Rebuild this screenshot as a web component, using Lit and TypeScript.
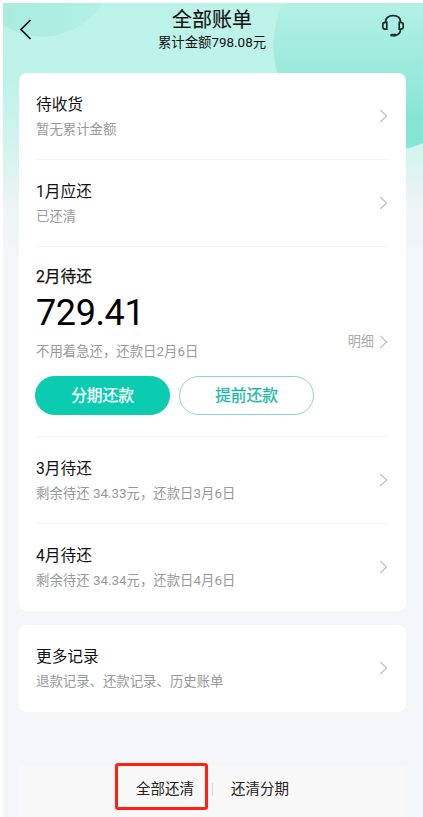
import { LitElement, html, css } from "lit";
import { customElement, property } from "lit/decorators.js";

const chevron = html`<svg class="chevron" width="9" height="14" viewBox="0 0 9 14" fill="none">
  <path d="M1.2 1 7.6 7 1.2 13" stroke="#c3c3c3" stroke-width="1.3" />
</svg>`;

@customElement("bill-row")
class BillRow extends LitElement {
  @property() heading = "";
  @property() note = "";

  static styles = css`
    :host {
      box-sizing: border-box;
      height: 87px;
      display: flex;
      align-items: center;
      justify-content: space-between;
      padding-right: 1px;
      border-bottom: 1px solid #f5f5f6;
    }
    :host(:last-of-type) {
      border-bottom-color: transparent;
    }
    .text {
      padding-top: 1px;
    }
    .heading {
      font-size: 15.7px;
      line-height: 23px;
      color: #111;
    }
    .note {
      margin-top: 4px;
      font-size: 13.4px;
      line-height: 20px;
      color: #999;
    }
    .chevron {
      display: block;
    }
  `;

  render() {
    return html`
      <div class="text">
        <div class="heading">${this.heading}</div>
        <div class="note">${this.note}</div>
      </div>
      ${chevron}
    `;
  }
}

@customElement("app-root")
class AppRoot extends LitElement {
  static styles = css`
    :host {
      display: block;
      box-sizing: border-box;
      width: 423px;
      height: 817px;
      padding: 3px 0 0 3px;
      background: #fff;
      overflow: hidden;
      font-family: Roboto, "Noto Sans CJK SC", sans-serif;
    }
    .screen {
      position: relative;
      height: 814px;
      display: flex;
      flex-direction: column;
      overflow: hidden;
      background: linear-gradient(#bcf2e8 0, #bdf3e9 75px, #d6f4ee 155px, #eff4f4 205px, #f5f6f9 260px);
    }
    .backdrop {
      position: absolute;
      top: 0;
      left: 0;
    }
    .header {
      position: relative;
      box-sizing: border-box;
      height: 69.5px;
      display: grid;
      grid-template-columns: 60px 1fr 62px;
      padding-top: 4px;
    }
    .back {
      margin: 12px 0 0 16px;
    }
    .support {
      margin: 7px 0 0 19.5px;
    }
    .titles {
      text-align: center;
      color: #111;
    }
    .title {
      font-size: 20px;
      line-height: 26px;
      -webkit-text-stroke: 0.15px #111;
    }
    .total {
      font-size: 13.4px;
      line-height: 19px;
    }
    .card {
      position: relative;
      margin: 0 17px 0 16px;
      padding: 0 17px;
      border-radius: 8px;
      background: #fff;
    }
    .more {
      margin-top: 14px;
    }
    .current {
      box-sizing: border-box;
      height: 190px;
      padding-top: 18px;
      border-bottom: 1px solid #f5f5f6;
    }
    .month {
      font-size: 15.7px;
      line-height: 23px;
      color: #111;
      -webkit-text-stroke: 0.25px #111;
    }
    .summary {
      display: flex;
      justify-content: space-between;
      align-items: flex-end;
    }
    .amount {
      margin-top: 1px;
      font-size: 36px;
      line-height: 48px;
      color: #000;
      letter-spacing: -0.4px;
    }
    .note {
      margin-top: 5px;
      font-size: 13.4px;
      line-height: 20px;
      color: #999;
    }
    .detail {
      display: flex;
      align-items: center;
      gap: 5px;
      padding: 0 1px 10px 0;
      font-size: 13.2px;
      line-height: 20px;
      color: #aaa;
    }
    .actions {
      display: flex;
      gap: 9px;
      margin: 14px 0 0 -1px;
    }
    .button {
      box-sizing: border-box;
      width: 135px;
      height: 39px;
      border: 1px solid #8fd3c8;
      border-radius: 20px;
      text-align: center;
      font-size: 15.7px;
      line-height: 37px;
      color: #14b8a2;
      -webkit-text-stroke: 0.25px currentColor;
    }
    .primary {
      border-color: #0bcbb1;
      background: #0bcbb1;
      color: #fff;
    }
    .footer {
      position: relative;
      box-sizing: border-box;
      height: 51px;
      margin: auto 17px 0 16px;
      display: flex;
      justify-content: center;
      align-items: flex-start;
      padding-top: 14px;
      background: #f8f8f8;
      font-size: 14.5px;
      line-height: 20px;
      color: #222;
    }
    .choice {
      position: relative;
      padding: 0 18px;
    }
    .highlight {
      position: absolute;
      left: -3px;
      top: -17px;
      box-sizing: border-box;
      width: 93px;
      height: 47px;
      border: 3px solid #fe2113;
      border-radius: 3px;
    }
    .separator {
      width: 1px;
      height: 13px;
      margin-top: 3px;
      background: #d8d8d8;
    }
  `;

  render() {
    return html`
      <div class="screen">
        <svg class="backdrop" width="420" height="260" viewBox="3 3 420 260">
          <defs>
            <linearGradient id="big" x1="0" y1="3" x2="0" y2="152" gradientUnits="userSpaceOnUse">
              <stop offset="0" stop-color="#b3f0e6" />
              <stop offset="0.5" stop-color="#98e9db" />
              <stop offset="0.8" stop-color="#86e5d5" />
              <stop offset="1" stop-color="#85e5d4" />
            </linearGradient>
            <linearGradient id="small" x1="0" x2="1">
              <stop offset="0.2" stop-color="#a9ecdf" />
              <stop offset="1" stop-color="#b3f0e5" />
            </linearGradient>
          </defs>
          <circle cx="42" cy="-35" r="71.5" fill="url(#small)" />
          <circle cx="380.5" cy="45" r="107" fill="url(#big)" />
        </svg>
        <div class="header">
          <svg class="back" width="14" height="22" viewBox="0 0 14 22" fill="none">
            <path d="M11.5 1 2 10.5 11.5 20" stroke="#111" stroke-width="1.7" />
          </svg>
          <div class="titles">
            <div class="title">全部账单</div>
            <div class="total">累计金额798.08元</div>
          </div>
          <svg class="support" width="24" height="24" viewBox="0 0 24 24" fill="none" stroke="#1b2b2a" stroke-width="1.7">
            <path d="M4.6 8.5V7.8C4.6 3.8 7.6 1.7 12 1.7s7.4 2.1 7.4 6.1v.7" />
            <path d="M5.8 8.4v6.8H4.3c-1.5 0-2.5-1-2.5-2.4v-2c0-1.4 1-2.4 2.5-2.4z" />
            <path d="M18.2 8.4v6.8h1.5c1.5 0 2.5-1 2.5-2.4v-2c0-1.4-1-2.4-2.5-2.4z" />
            <path d="M19.4 15.5c0 3.2-1.6 5.2-4.9 5.6" />
            <path d="M10.7 21.2h3.4" stroke-width="2.8" stroke-linecap="round" />
          </svg>
        </div>
        <div class="card">
          <bill-row heading="待收货" note="暂无累计金额"></bill-row>
          <bill-row heading="1月应还" note="已还清"></bill-row>
          <div class="current">
            <div class="month">2月待还</div>
            <div class="summary">
              <div>
                <div class="amount">729.41</div>
                <div class="note">不用着急还，还款日2月6日</div>
              </div>
              <div class="detail"><span>明细</span>${chevron}</div>
            </div>
            <div class="actions">
              <div class="button primary">分期还款</div>
              <div class="button">提前还款</div>
            </div>
          </div>
          <bill-row heading="3月待还" note="剩余待还 34.33元，还款日3月6日"></bill-row>
          <bill-row heading="4月待还" note="剩余待还 34.34元，还款日4月6日"></bill-row>
        </div>
        <div class="card more">
          <bill-row heading="更多记录" note="退款记录、还款记录、历史账单"></bill-row>
        </div>
        <div class="footer">
          <div class="choice">全部还清<span class="highlight"></span></div>
          <div class="separator"></div>
          <div class="choice">还清分期</div>
        </div>
      </div>
    `;
  }
}
